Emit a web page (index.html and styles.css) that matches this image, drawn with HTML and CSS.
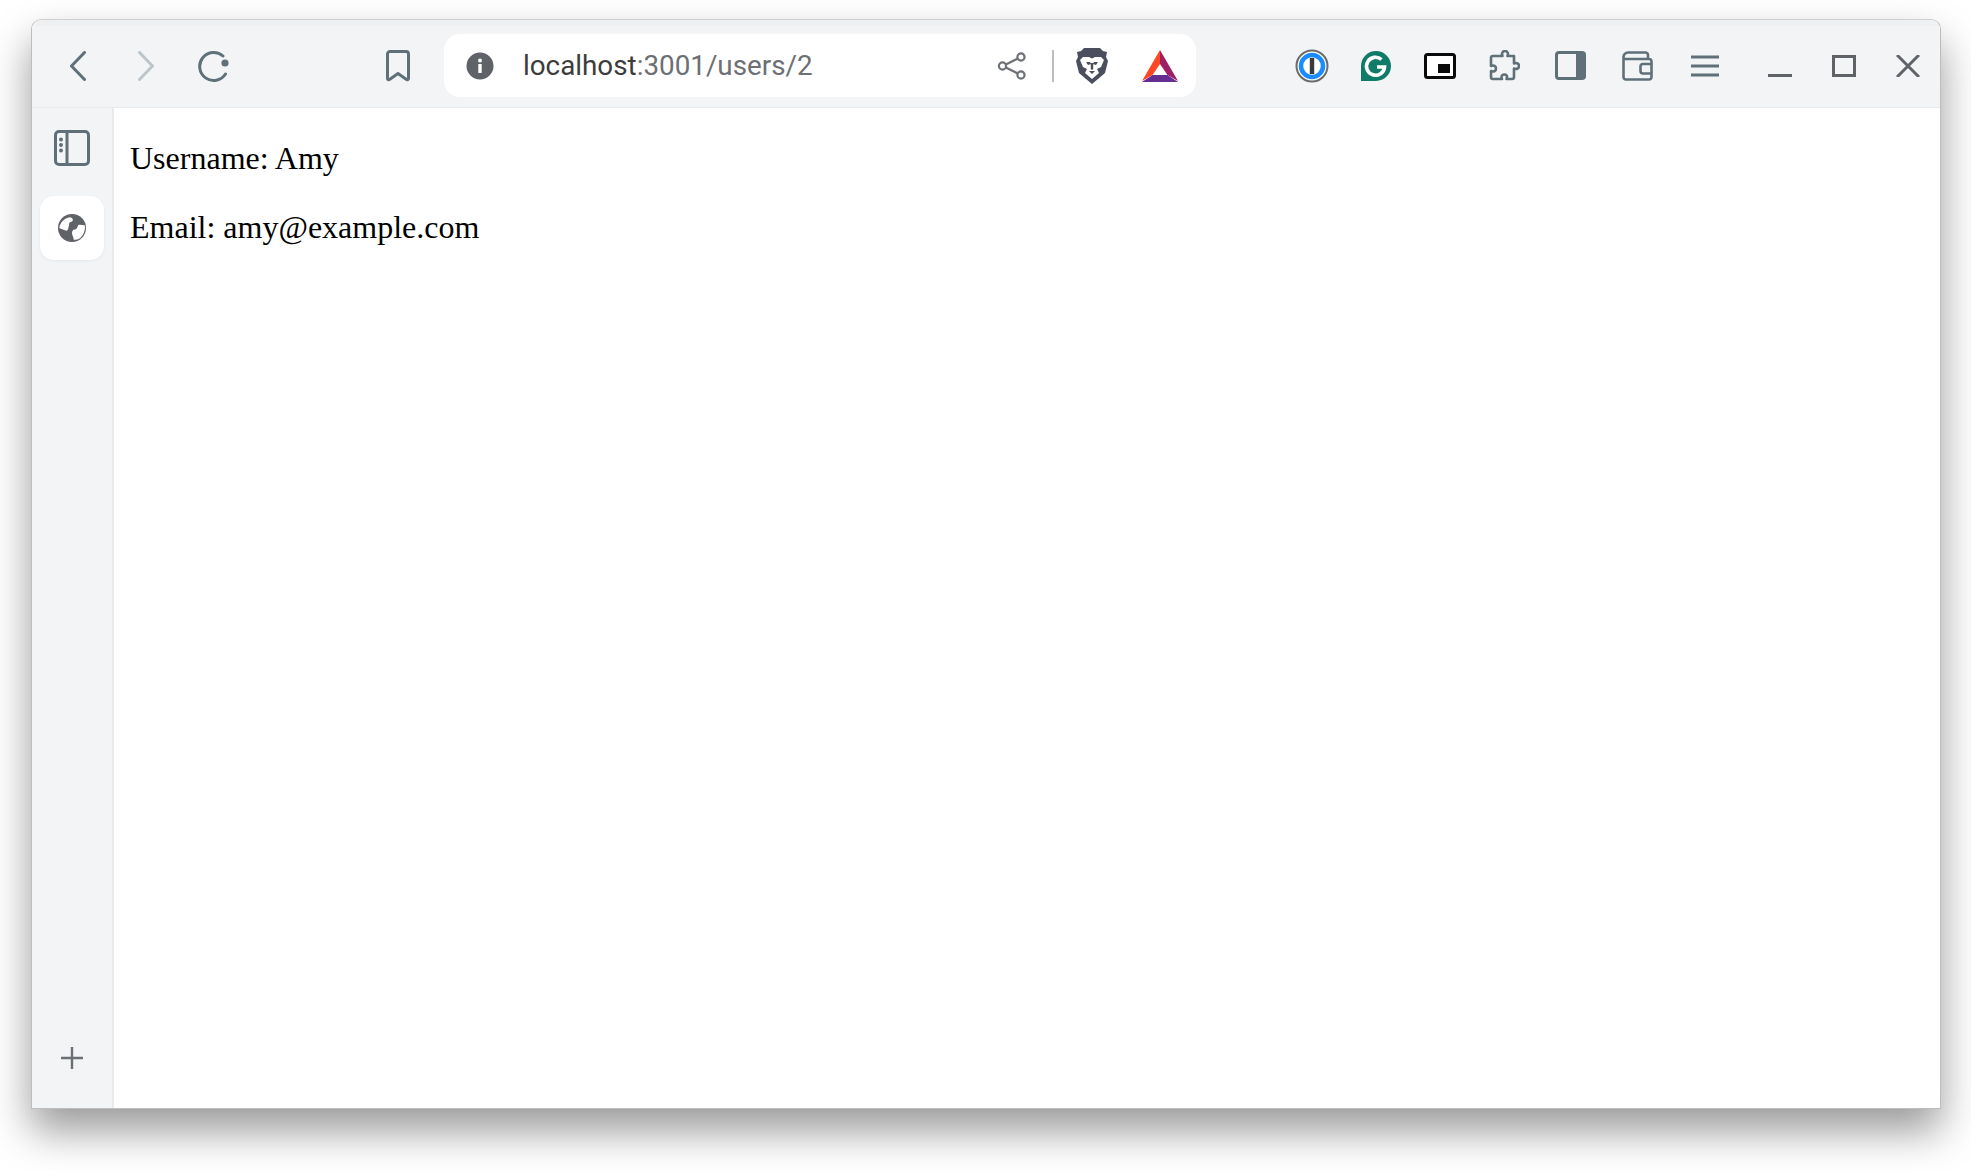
FILE: index.html
```html
<!DOCTYPE html>
<html lang="en">
<head>
<meta charset="utf-8">
<title>localhost:3001/users/2</title>
<link rel="stylesheet" href="styles.css">
</head>
<body>
<div class="window">
  <header class="toolbar">
    <div class="btn"><svg width="16" height="30" viewBox="0 0 16 30"><path class="ln" d="M14.5 1.5 1.5 15l13 13.5"/></svg></div>
    <div class="btn"><svg width="16" height="30" viewBox="0 0 16 30"><path class="ln faded" d="M1.5 1.5 14.5 15l-13 13.5"/></svg></div>
    <div class="btn"><svg width="32" height="32" viewBox="0 0 32 32"><path class="ln" d="M25 6A14 14 0 1 0 27.500 24"/><circle cx="27" cy="13" r="3.600" fill="#5f7079"/></svg></div>
    <div class="btn bookmark"><svg width="24" height="32" viewBox="0 0 24 32"><path class="ln" d="M1.500 4a2.500 2.500 0 0 1 2.500-2.500h16a2.500 2.500 0 0 1 2.500 2.500v24.500a1.200 1.200 0 0 1-2 .9L12 23.500l-8.500 5.900a1.200 1.200 0 0 1-2-.9z"/></svg></div>
    <div class="urlbar">
      <svg class="info" width="28" height="28" viewBox="0 0 28 28"><circle cx="14" cy="14" r="13.500" fill="#5f6368"/><rect x="12.300" y="12" width="3.400" height="9" fill="#fff"/><circle cx="14" cy="8.500" r="2" fill="#fff"/></svg>
      <div class="url"><span class="host">localhost</span><span class="path">:3001/users/2</span></div>
      <svg class="share" width="30" height="28" viewBox="0 0 30 28" fill="none" stroke="#6e7277" stroke-width="2.200"><circle cx="24" cy="5" r="3.600"/><circle cx="24" cy="23" r="3.600"/><circle cx="5.500" cy="14" r="3.600"/><path d="M8.800 12.400 20.800 6.600M8.800 15.600l12 5.800"/></svg>
      <span class="divider"></span>
      <svg class="lion" width="32" height="36" viewBox="0 0 32 36"><path fill="#4b4e5c" d="M8 0h16l3 3 4 1-1 5 2 4-3 12-7 6-6 5-6-5-7-6L0 13l2-4-1-5 4-1z"/><path fill="#fff" d="M7 9h6l3 1.500L19 9h6l3 3-3 7-4 2 2 4-7 6-7-6 2-4-4-2-3-7z"/><path fill="#4b4e5c" d="M10 14h4l1 2-3 1zM22 14h-4l-1 2 3 1zM13 23h6l-3 3zM14.800 15h2.400v6l-1.200 1-1.200-1z"/></svg>
      <svg class="bat" width="36" height="32" viewBox="0 0 36 32"><path fill="#ff4724" d="M18 0v14l-7.500 11L0 31z"/><path fill="#9e1f63" d="M18 0l18 31-10.500-6L18 14z"/><path fill="#662d91" d="M0 32l10.500-7h15L36 32z"/></svg>
    </div>
    <div class="group ext">
      <div class="btn"><svg width="34" height="34" viewBox="0 0 34 34"><circle cx="17" cy="17" r="15.500" fill="#fff" stroke="#6b6b6b" stroke-width="2"/><circle cx="17" cy="17" r="11" fill="none" stroke="#1a8cff" stroke-width="4.500"/><rect x="14.800" y="9" width="4.400" height="16" fill="#3a3a3a"/></svg></div>
      <div class="btn"><svg width="32" height="32" viewBox="0 0 32 32"><path fill="#0f7b68" d="M1 16a15 15 0 1 1 15 15H1z"/><path fill="none" stroke="#fff" stroke-width="3.600" d="M21.500 9.500A9 9 0 1 0 24.500 17H17"/></svg></div>
      <div class="btn"><svg width="32" height="26" viewBox="0 0 32 26"><rect x="1.500" y="1.500" width="29" height="23" rx="2" fill="#fff" stroke="#0a0a0a" stroke-width="3"/><rect x="14" y="11" width="12" height="9" fill="#0a0a0a"/></svg></div>
      <div class="btn"><svg width="32" height="32" viewBox="0 0 32 32"><path class="ln thin" d="M11 6h3.500c-1.500-3.500 1-5 2.500-5s4 1.500 2.500 5H26v7.500c3.500-1.500 5 1 5 2.500s-1.500 4-5 2.500V27a2 2 0 0 1-2 2h-5.500c1.500-3.500-.5-4.500-2-4.500s-4 1-2.500 4.500H5a2 2 0 0 1-2-2v-6c3 1.500 5-.5 5-2.500s-2-4-5-2.500V8a2 2 0 0 1 2-2z"/></svg></div>
    </div>
    <div class="group tools">
      <div class="btn"><svg width="31" height="29" viewBox="0 0 31 29"><rect x="1.500" y="1.500" width="28" height="26" rx="2.500" fill="none" stroke="#5f7079" stroke-width="3"/><path d="M21 1h7.500a2 2 0 0 1 2 2v23a2 2 0 0 1-2 2H21z" fill="#5f7079"/></svg></div>
      <div class="btn"><svg width="31" height="30" viewBox="0 0 31 30"><path class="ln thin" d="M26 8V4a2.500 2.500 0 0 0-2.500-2.500H6A4.500 4.500 0 0 0 1.500 6v20A2.500 2.500 0 0 0 4 28.500h23a2.500 2.500 0 0 0 2.500-2.500V10.500A2.500 2.500 0 0 0 27 8H1.500"/><path class="ln thin" d="M29 13h-8a2.500 2.500 0 0 0-2.500 2.500V20a2.500 2.500 0 0 0 2.500 2.500h8"/></svg></div>
      <div class="btn"><svg width="28" height="22" viewBox="0 0 28 22"><path class="ln bars" d="M0 2h28M0 11h28M0 20h28"/></svg></div>
    </div>
    <div class="group controls">
      <div class="btn"><svg width="24" height="22" viewBox="0 0 24 22"><rect y="19" width="24" height="3" fill="#5f6368"/></svg></div>
      <div class="btn"><svg width="24" height="22" viewBox="0 0 24 22"><rect x="1.500" y="1.500" width="21" height="19" fill="none" stroke="#5f6368" stroke-width="3"/></svg></div>
      <div class="btn"><svg width="24" height="22" viewBox="0 0 24 22"><path d="M1 0 23 22M23 0 1 22" fill="none" stroke="#5f6368" stroke-width="3"/></svg></div>
    </div>
  </header>
  <div class="main">
    <aside class="sidebar">
      <div class="side-item"><svg width="36" height="36" viewBox="0 0 36 36"><rect x="1.500" y="1.500" width="33" height="33" rx="3.500" fill="none" stroke="#5f7079" stroke-width="3"/><path d="M13 2v32" stroke="#5f7079" stroke-width="3"/><circle cx="7" cy="9.500" r="2" fill="#5f7079"/><circle cx="7" cy="15" r="2" fill="#5f7079"/><circle cx="7" cy="20.500" r="2" fill="#5f7079"/></svg></div>
      <div class="side-item active"><svg width="28" height="28" viewBox="0 0 28 28"><circle cx="14" cy="14" r="14" fill="#5f6368"/><path d="M1.300 14C2 9 6 4 12 3.300c2 .3 3.400 2 2.700 3.400-.7 1.500-3 1-3.400 2.300-.4 1.500 0 2.500-.6 3.300-.5 2.500-.5 3.500-2 4.400-2.500-.3-5-2-7.700-2.700zM27 11.500c.3 5-1.500 9.500-4.700 12.500-2 1.500-4.300 1.700-6.600 1.700.2-2-1.700-4.500-1.700-6.700 0-1.500.7-2.800 1.700-3.300 1.300-.6 2.600-.3 3.300-1.700.4-1 .7-2.300 1.700-3.300 2-.2 4.300.2 6.300.8z" fill="#fff"/></svg></div>
      <div class="side-item plus"><svg width="22" height="22" viewBox="0 0 22 22"><path d="M11 0v22M0 11h22" stroke="#6b6f76" stroke-width="2.400"/></svg></div>
    </aside>
    <main class="content">
      <p>Username: Amy</p>
      <p>Email: amy@example.com</p>
    </main>
  </div>
</div>
</body>
</html>
```

FILE: styles.css
```css
html, body {
  margin: 0;
  height: 100%;
  background: #fff;
  overflow: hidden;
}
body {
  padding: 19px 0 0 31px;
  box-sizing: border-box;
}
.window {
  width: 1910px;
  height: 1090px;
  box-sizing: border-box;
  display: flex;
  flex-direction: column;
  background: #fff;
  border: 1px solid #bdbdbd;
  border-top-color: #cfcfcf;
  border-radius: 10px 10px 0 0;
  box-shadow: 0 22px 42px rgba(0, 0, 0, .4);
}
.toolbar {
  display: flex;
  align-items: center;
  box-sizing: border-box;
  height: 88px;
  padding: 14px 0 10px 14px;
  background: linear-gradient(#eff0f2 6px, #f3f4f6 6px);
  border-bottom: 1px solid #e9eaec;
  border-radius: 9px 9px 0 0;
}
.btn {
  width: 64px;
  height: 64px;
  flex: none;
  display: flex;
  align-items: center;
  justify-content: center;
}
.toolbar > .btn + .btn { margin-left: 4px; }
.toolbar > .btn.bookmark { margin-left: 120px; }
.ln {
  fill: none;
  stroke: #5f7079;
  stroke-width: 3;
  stroke-linecap: round;
  stroke-linejoin: round;
}
.ln.thin { stroke-width: 2.600; }
.ln.bars { stroke-width: 3; stroke-linecap: butt; }
.ln.faded { stroke: #bcc6ca; }
.urlbar {
  flex: none;
  width: 752px;
  height: 63px;
  margin-left: 14px;
  box-sizing: border-box;
  padding-left: 22px;
  display: flex;
  align-items: center;
  background: #fff;
  border-radius: 16px;
}
.url {
  flex: none;
  width: 474px;
  margin-left: 29px;
  font: 400 27.800px "Roboto", "Noto Sans", sans-serif;
  white-space: nowrap;
}
.host { color: #3c3c3c; }
.path { color: #6c6f74; }
.divider {
  width: 2px;
  height: 32px;
  margin-left: 25px;
  background: #bdbdbd;
}
.lion { margin-left: 22px; }
.bat { margin-left: 34px; }
.group { display: flex; flex: none; }
.ext { margin-left: 84px; }
.tools { margin-left: 1px; }
.tools .btn { width: 67px; }
.controls { margin-left: 10px; }
.main {
  flex: 1;
  display: flex;
  min-height: 0;
}
.sidebar {
  width: 82px;
  box-sizing: border-box;
  padding: 8px 9px 18px 8px;
  display: flex;
  flex-direction: column;
  gap: 16px;
  background: #f3f4f6;
  border-right: 2px solid #e9eaec;
}
.side-item {
  width: 64px;
  height: 64px;
  display: flex;
  align-items: center;
  justify-content: center;
}
.side-item.active {
  background: #fff;
  border-radius: 14px;
  box-shadow: 0 1px 3px rgba(0, 0, 0, .06);
}
.side-item.plus { margin-top: auto; }
.content {
  flex: 1;
  padding: 32px 16px;
  font: 32px/37px "Liberation Serif", serif;
  color: #000;
}
.content p { margin: 0 0 32px; }
```
